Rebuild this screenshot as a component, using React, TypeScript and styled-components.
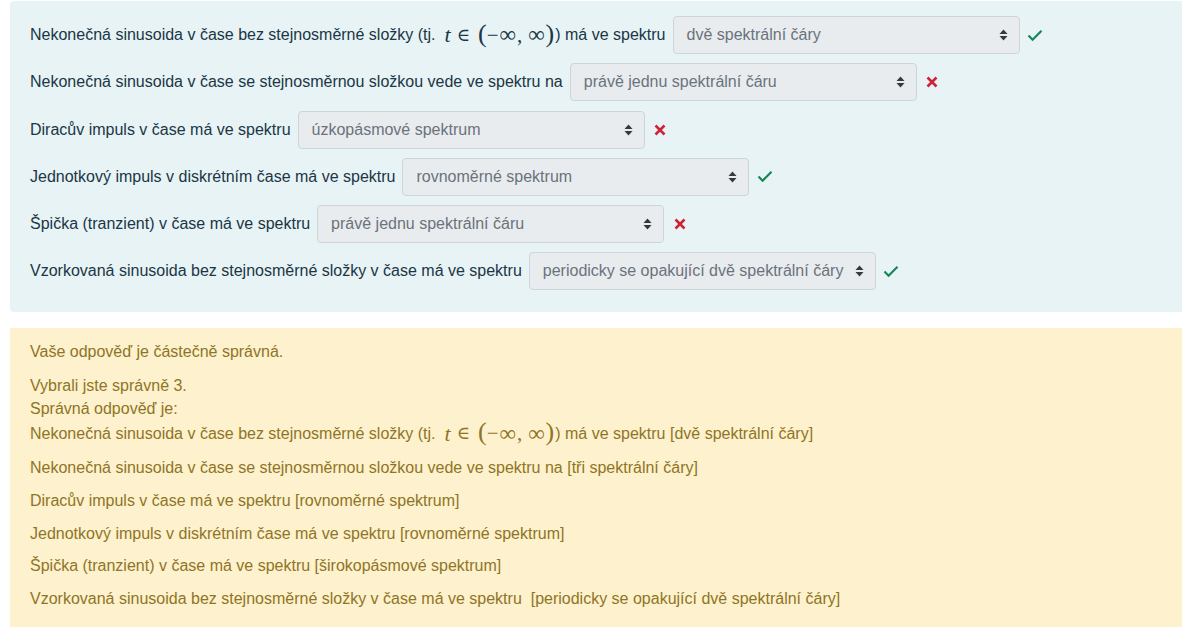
import React from "react";
import styled, { createGlobalStyle } from "styled-components";

const Global = createGlobalStyle`
  html, body { margin: 0; padding: 0; background: #ffffff; }
  body { font-family: "Liberation Sans", Arial, sans-serif; font-size: 16px; }
`;

const Page = styled.div`
  padding: 1px 0 0 10px;
  display: flex;
  flex-direction: column;
  gap: 16px;
`;

const Formulation = styled.div`
  background: #e7f3f5;
  color: #1b3645;
  border-radius: 4px 0 0 4px;
  padding: 15px 20px 22px 20px;
  display: flex;
  flex-direction: column;
  gap: 9.3px;
`;

const Row = styled.div`
  display: flex;
  align-items: center;
  height: 38px;
  white-space: nowrap;
`;

const Label = styled.span`
  line-height: 22px;
  margin-right: 7px;
  display: inline-flex;
  align-items: center;
  white-space: pre;
`;

const Math = styled.span`
  font-family: "Liberation Serif", "DejaVu Serif", serif;
  font-size: 21px;
  margin: 0 1px 0 9px;
  display: inline-flex;
  align-items: center;
  i { font-style: italic; font-size: 22px; }
`;

const Rel = styled.span`
  margin: 0 8px 0 6px;
  font-size: 18px;
`;

const Inf = styled.span`
  font-size: 23px;
  margin: 0 1px;
`;

const Comma = styled.span`
  margin-right: 5px;
`;

const Paren = styled.span`
  font-size: 26px;
  line-height: 1;
  position: relative;
  top: -1px;
`;

const Select = styled.div`
  box-sizing: border-box;
  width: 347px;
  height: 38px;
  background: #e9ecef;
  border: 1px solid #ced4da;
  border-radius: 4px;
  color: #6a737c;
  display: flex;
  align-items: center;
  justify-content: space-between;
  padding: 0 11px 0 13px;
  font-size: 16px;
`;

const Arrow = styled.svg`
  flex: none;
  margin-left: 4px;
`;

const IconBox = styled.span<{ $ok: boolean }>`
  display: inline-flex;
  width: 17px;
  justify-content: center;
  margin-left: 7px;
  color: ${(p) => (p.$ok ? "#168858" : "#cc2436")};
`;

const Outcome = styled.div`
  background: #fef1cd;
  color: #8e7526;
  padding: 13px 20px 20px 20px;
  display: flex;
  flex-direction: column;
`;

const Para = styled.div`
  line-height: 22px;
  margin-bottom: 11px;
`;

const Line = styled.div`
  line-height: 23px;
`;

const Items = styled.div`
  display: flex;
  flex-direction: column;
  gap: 9.75px;
`;

const Item = styled.div<{ $tall?: boolean }>`
  line-height: 23px;
  white-space: pre;
  display: flex;
  align-items: center;
  min-height: ${(p) => (p.$tall ? "25px" : "23px")};
`;

const SelectArrow = () => (
  <Arrow width="9" height="12" viewBox="0 0 9 12">
    <path d="M4.5 0.5 L8.5 5 L0.5 5 Z" fill="#343a40" />
    <path d="M4.5 11.5 L8.5 7 L0.5 7 Z" fill="#343a40" />
  </Arrow>
);

const Check = () => (
  <svg width="16" height="13" viewBox="0 0 16 13">
    <path d="M1.5 6.6 L5.6 10.8 L14.5 1.8" fill="none" stroke="currentColor" strokeWidth="2.2" />
  </svg>
);

const Cross = () => (
  <svg width="12" height="12" viewBox="0 0 12 12">
    <path d="M1.5 1.5 L10.5 10.5 M10.5 1.5 L1.5 10.5" fill="none" stroke="currentColor" strokeWidth="2.6" />
  </svg>
);

const MathT = () => (
  <Math>
    <i>t</i>
    <Rel>∈</Rel>
    <Paren>(</Paren>−<Inf>∞</Inf>
    <Comma>,</Comma>
    <Inf>∞</Inf>
    <Paren>)</Paren>
  </Math>
);

type Q = { pre: string; math?: boolean; post?: string; value: string; ok: boolean };

const questions: Q[] = [
  { pre: "Nekonečná sinusoida v čase bez stejnosměrné složky (tj.", math: true, post: ") má ve spektru", value: "dvě spektrální čáry", ok: true },
  { pre: "Nekonečná sinusoida v čase se stejnosměrnou složkou vede ve spektru na", value: "právě jednu spektrální čáru", ok: false },
  { pre: "Diracův impuls v čase má ve spektru", value: "úzkopásmové spektrum", ok: false },
  { pre: "Jednotkový impuls v diskrétním čase má ve spektru", value: "rovnoměrné spektrum", ok: true },
  { pre: "Špička (tranzient) v čase má ve spektru", value: "právě jednu spektrální čáru", ok: false },
  { pre: "Vzorkovaná sinusoida bez stejnosměrné složky v čase má ve spektru", value: "periodicky se opakující dvě spektrální čáry", ok: true },
];

export default function App() {
  return (
    <>
      <Global />
      <Page>
        <Formulation>
          {questions.map((q, i) => (
            <Row key={i}>
              <Label>
                {q.pre}
                {q.math && (
                  <>
                    <MathT />
                    {q.post}
                  </>
                )}
              </Label>
              <Select>
                <span>{q.value}</span>
                <SelectArrow />
              </Select>
              <IconBox $ok={q.ok}>{q.ok ? <Check /> : <Cross />}</IconBox>
            </Row>
          ))}
        </Formulation>
        <Outcome>
          <Para>Vaše odpověď je částečně správná.</Para>
          <Line>Vybrali jste správně 3.</Line>
          <Line>Správná odpověď je:</Line>
          <Items>
            <Item $tall>
              Nekonečná sinusoida v čase bez stejnosměrné složky (tj.
              <MathT />
              {") má ve spektru [dvě spektrální čáry]"}
            </Item>
            <Item>Nekonečná sinusoida v čase se stejnosměrnou složkou vede ve spektru na [tři spektrální čáry]</Item>
            <Item>Diracův impuls v čase má ve spektru [rovnoměrné spektrum]</Item>
            <Item>Jednotkový impuls v diskrétním čase má ve spektru [rovnoměrné spektrum]</Item>
            <Item>Špička (tranzient) v čase má ve spektru [širokopásmové spektrum]</Item>
            <Item>Vzorkovaná sinusoida bez stejnosměrné složky v čase má ve spektru  [periodicky se opakující dvě spektrální čáry]</Item>
          </Items>
        </Outcome>
      </Page>
    </>
  );
}
